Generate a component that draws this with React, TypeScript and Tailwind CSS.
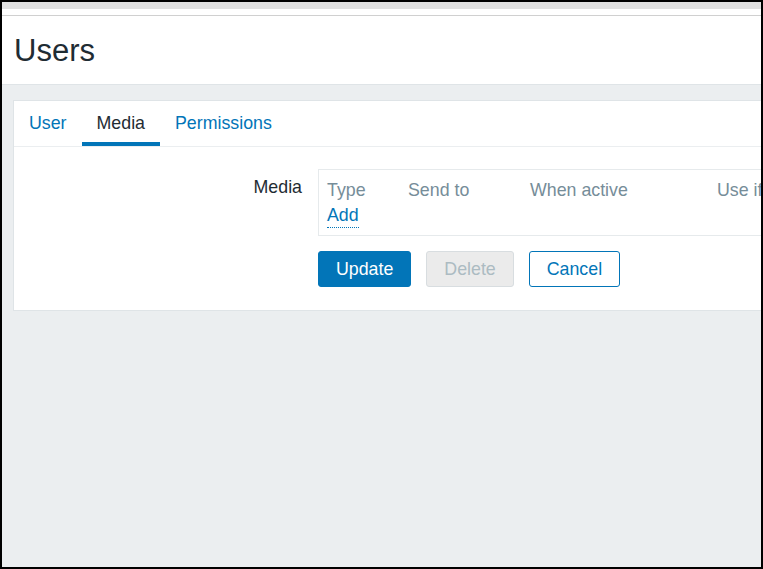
export default function App() {
  return (
    <div
      className="w-[763px] h-[569px] border-2 border-black bg-[#ebeef0] overflow-hidden flex flex-col text-[#1f2c33]"
      style={{ fontFamily: '"Liberation Sans", Arial, sans-serif' }}
    >
      <div className="h-[7px] bg-[#e0e0e0] shrink-0" />
      <div className="bg-white shrink-0">
        <div className="h-[7px] border-b border-[#d0d0d0]" />
        <div className="h-[69px] border-b border-[#dfe4e7] pl-[12px] pt-[17px]">
          <h1 className="text-[31px] leading-[36px] font-normal">Users</h1>
        </div>
      </div>
      <div className="pt-[15px] pl-[11px] shrink-0">
        <div className="w-[900px] bg-white border border-[#dfe4e7] pb-[23px]">
          <div className="flex border-b border-[#ebeef0] text-[17.8px] leading-[24px]">
            <div className="h-[45px] pt-[10px] px-[15px] text-[#0275b8]">User</div>
            <div className="h-[45px] pt-[10px] px-[15px] border-b-4 border-[#0275b8] text-[#1f2c33]">Media</div>
            <div className="h-[45px] pt-[10px] px-[15px] text-[#0275b8]">Permissions</div>
          </div>
          <div className="pt-[22px] text-[17.8px] leading-[24px]">
            <div className="flex items-start">
              <div className="w-[288px] text-right pt-[6px]">Media</div>
              <div className="ml-[16px] flex-1">
                <div className="border border-[#e6eaec] px-[8px] pt-[8px] pb-[7px]">
                  <div className="flex text-[#768d99]">
                    <div className="w-[81px]">Type</div>
                    <div className="w-[122px]">Send to</div>
                    <div className="w-[187px]">When active</div>
                    <div>Use if</div>
                  </div>
                  <div>
                    <span className="inline-block h-[26px] pt-[1px] border-b border-dotted border-[#0275b8] text-[#0275b8]">
                      Add
                    </span>
                  </div>
                </div>
                <div className="flex gap-[15px] mt-[15px]">
                  <button className="h-[36px] px-[17px] pb-[1px] rounded-[3px] border border-[#0275b8] bg-[#0275b8] text-white">
                    Update
                  </button>
                  <button className="h-[36px] px-[17px] pb-[1px] rounded-[3px] border border-[#d8dde0] bg-[#ebebeb] text-[#acbbc2]">
                    Delete
                  </button>
                  <button className="h-[36px] px-[17px] pb-[1px] rounded-[3px] border border-[#0275b8] bg-white text-[#0275b8]">
                    Cancel
                  </button>
                </div>
              </div>
            </div>
          </div>
        </div>
      </div>
    </div>
  );
}
